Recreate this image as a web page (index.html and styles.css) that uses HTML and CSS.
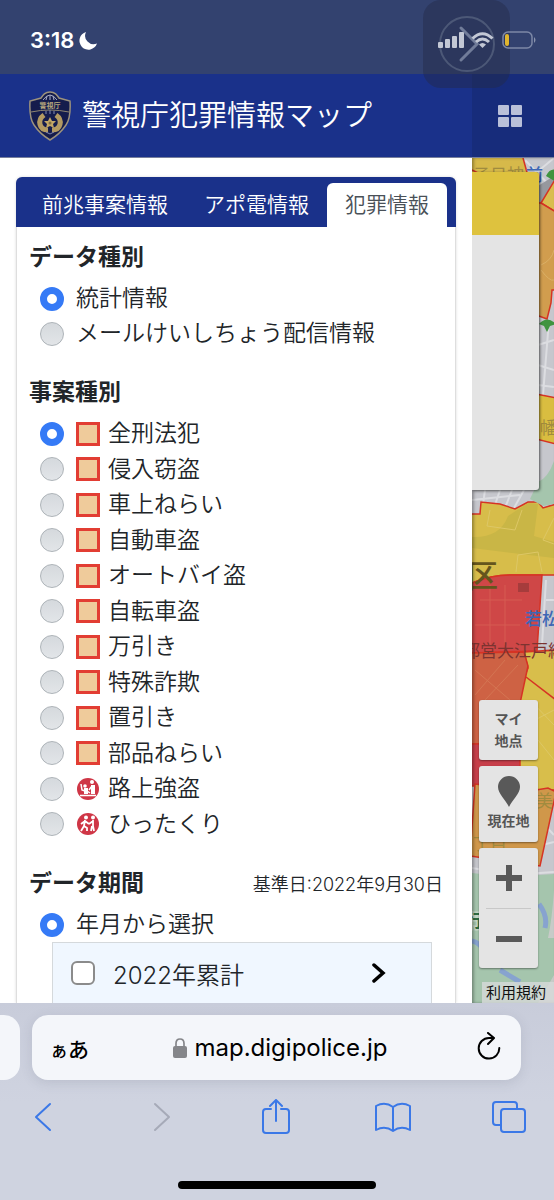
FILE: index.html
```html
<!DOCTYPE html>
<html lang="ja">
<head>
    <meta charset="UTF-8">
    <meta name="viewport" content="width=device-width, initial-scale=1">
    <title>警視庁犯罪情報マップ</title>
    <link rel="stylesheet" href="styles.css">
</head>
<body>
    <div class="status-bar">
        <span class="time">3:18</span>
        <svg class="moon" width="19" height="19" viewBox="0 0 19 19"><path d="M7 1A9 9 0 1 0 18 12.500A8.500 8.500 0 0 1 7 1Z" fill="#fff"/></svg>
        <svg class="signal" width="26" height="16" viewBox="0 0 26 16" fill="#c3c8d5">
            <rect x="0" y="10" width="5" height="6" rx="1"/><rect x="7" y="7" width="5" height="9" rx="1"/><rect x="14" y="4" width="5" height="12" rx="1"/><rect x="21" y="0" width="5" height="16" rx="1"/>
        </svg>
        <svg class="wifi" width="23" height="17" viewBox="0 0 23 17" fill="none" stroke="#c3c8d5" stroke-width="3">
            <path d="M1.500 6.500Q11.500-3 21.500 6.500M5 10Q11.500 4 18 10"/><path d="M8 12.500Q11.500 9.500 15 12.500L11.500 16Z" fill="#c3c8d5" stroke="none"/>
        </svg>
        <svg class="battery" width="35" height="18" viewBox="0 0 35 18">
            <rect x="1" y="1" width="29" height="16" rx="5" fill="none" stroke="#7d88a7" stroke-width="1.500"/><rect x="3" y="3" width="4" height="12" rx="2" fill="#e0b52e"/><path d="M32 6Q35 9 32 12Z" fill="#8b94ae"/>
        </svg>
    </div>
    <div class="assistive">
        <svg viewBox="0 0 87 88"><circle cx="44" cy="44" r="27" fill="none" stroke="#4c5877" stroke-width="2"/><path d="M38 28L54 44L38 60" fill="none" stroke="#717c99" stroke-width="3" stroke-linecap="round"/></svg>
    </div>

    <header class="header">
        <svg class="logo" width="42" height="50" viewBox="0 0 42 50">
            <path d="M21 1C16 1 14 4 12 7L1 10Q0 27 5 34Q11 43 21 49Q31 43 37 34Q42 27 41 10L30 7C28 4 26 1 21 1Z" fill="#151c4c" stroke="#9c927d" stroke-width="1.500"/>
            <path d="M2 21Q21 17 40 21" fill="none" stroke="#8e8571"/>
            <path d="M14 9Q21-1 28 9M17 9L18 5M21 9V4M25 9L24 5" fill="none" stroke="#a8adc7"/>
            <text x="21" y="17" text-anchor="middle" class="logo-text">警視庁</text>
            <path d="M15 24C8 29 10 39 19 39M27 24C34 29 32 39 23 39" fill="none" stroke="#b39a62" stroke-width="5"/>
            <path d="M21 26L23 30L27 30L24 33L25 37L21 35L17 37L18 33L15 30L19 30Z" fill="#c3a766"/>
            <circle cx="21" cy="32" r="1.500" fill="#7d6c43"/>
            <path d="M17 20V23M21 19V23M25 20V23M17 41L21 43L25 41" stroke="#8289ae" fill="none"/>
        </svg>
        <h1>警視庁犯罪情報マップ</h1>
        <div class="menu-side">
            <button class="menu" aria-label="メニュー"><i></i><i></i><i></i><i></i></button>
        </div>
    </header>

    <main class="content">
        <div class="drawer">
            <form class="panel">
                <nav class="tabs">
                    <a href="#zencho">前兆事案情報</a>
                    <a href="#apoden">アポ電情報</a>
                    <a href="#hanzai" class="active">犯罪情報</a>
                </nav>

                <section>
                    <h2>データ種別</h2>
                    <ul class="list">
                        <li><label><input type="radio" name="data" checked>統計情報</label></li>
                        <li><label><input type="radio" name="data">メールけいしちょう配信情報</label></li>
                    </ul>
                </section>

                <section>
                    <h2>事案種別</h2>
                    <ul class="list crimes">
                        <li><label><input type="radio" name="crime" checked><span class="area"></span>全刑法犯</label></li>
                        <li><label><input type="radio" name="crime"><span class="area"></span>侵入窃盗</label></li>
                        <li><label><input type="radio" name="crime"><span class="area"></span>車上ねらい</label></li>
                        <li><label><input type="radio" name="crime"><span class="area"></span>自動車盗</label></li>
                        <li><label><input type="radio" name="crime"><span class="area"></span>オートバイ盗</label></li>
                        <li><label><input type="radio" name="crime"><span class="area"></span>自転車盗</label></li>
                        <li><label><input type="radio" name="crime"><span class="area"></span>万引き</label></li>
                        <li><label><input type="radio" name="crime"><span class="area"></span>特殊詐欺</label></li>
                        <li><label><input type="radio" name="crime"><span class="area"></span>置引き</label></li>
                        <li><label><input type="radio" name="crime"><span class="area"></span>部品ねらい</label></li>
                        <li><label><input type="radio" name="crime">
                            <svg class="mark" viewBox="0 0 24 24"><circle cx="12" cy="12" r="11" fill="#cf3646"/><g fill="#fff"><circle cx="16" cy="5" r="2"/><circle cx="9" cy="9" r="1.800"/><path d="M15 8H19V17H15ZM8 11H12V17H8Z"/><path d="M16 9L13 13M5 7L6 13L9 14M4 18.500H20M11 14L14 16" fill="none" stroke="#fff" stroke-width="1.500"/></g></svg>路上強盗</label></li>
                        <li><label><input type="radio" name="crime">
                            <svg class="mark" viewBox="0 0 24 24"><circle cx="12" cy="12" r="11" fill="#cf3646"/><g fill="#fff"><circle cx="10" cy="5.500" r="2"/><circle cx="17" cy="5.500" r="2"/><path d="M9 8L8 14M9 9L5 12M9 9L13 12M8 14L5 19M8 14L11 16L11 19M17 8V14M17 9L13 12M16 14L15 19M17 14L18 19" fill="none" stroke="#fff" stroke-width="1.800"/></g></svg>ひったくり</label></li>
                    </ul>
                </section>

                <section>
                    <div class="heading-row">
                        <h2>データ期間</h2>
                        <span>基準日:2022年9月30日</span>
                    </div>
                    <ul class="list">
                        <li><label><input type="radio" name="period" checked>年月から選択</label></li>
                    </ul>
                    <div class="period">
                        <label><input type="checkbox">2022年累計</label>
                        <svg width="14" height="20" viewBox="0 0 14 20"><path d="M2 2L11 10L2 18" fill="none" stroke="#000" stroke-width="3.500" stroke-linecap="round"/></svg>
                    </div>
                </section>
            </form>
        </div>

        <aside class="map">
            <svg class="map-canvas" viewBox="472 158 82 845" preserveAspectRatio="xMinYMin slice">
                <rect x="472" y="158" width="200" height="845" fill="#c6c7cd"/>
                <g stroke="#dcdde1" stroke-width="2" fill="none">
                    <path d="M525 160L554 190M554 158L530 178M538 345L554 340M538 365L554 370M549 320L543 395M538 385L554 387M472 500L520 495M485 490L482 512M500 490L495 505M512 490L505 508M524 490L514 508M546 580L542 645M546 600H554"/>
                    <path d="M540 820L554 835M538 846L554 842M472 868Q510 876 554 872"/>
                </g>
                <path d="M538 205V186L554 176V190Z" fill="#96989e"/>
                <g stroke="#d63324" stroke-width="1.500">
                    <path d="M472 158H523L528 176H472Z" fill="#d6b94a" stroke="none"/>
                    <path d="M523 158L528 176M472 170L480 174" fill="none"/>
                    <path d="M556 178L541 203L556 212Z" fill="#d9bd50"/>
                    <path d="M541 203L556 212V290L552 290L551 303L547 319L536 315V203Z" fill="#d19d4e"/>
                    <path d="M536 394L556 398V444L536 439Z" fill="#d9bd40"/>
                    <path d="M470 514H480L481 502L500 504L515 509L528 502H538L543 508L556 504V575H510Q490 575 470 584Z" fill="#d7bd4a"/>
                    <path d="M472 537Q500 538 508 516L528 503L538 504L534 536L554 542V558L472 548Z" fill="#c9b646" stroke="none"/>
                    <path d="M470 584Q490 575 510 575H542L537 651L470 653Z" fill="#cf4747"/>
                    <path d="M524 652L556 650V790H515V700L528 668Z" fill="#d8be4b"/>
                    <path d="M470 653L524 652L528 666L519 708V744H470Z" fill="#ce6244"/>
                    <path d="M470 744H520V786H470Z" fill="#c73f4a"/>
                    <path d="M526 677L556 700" fill="none"/>
                    <path d="M475 784L530 791L548 788L556 792L540 866L470 856Z" fill="#d0974a"/>
                </g>
                <g fill="none" stroke="#ddc766" stroke-width="1">
                    <path d="M490 510L487 526L515 530L522 510M554 518L543 540L554 544M518 555L538 552L542 572M518 555L516 572M530 700L554 725M535 720L554 710M538 740L554 760"/>
                    <path d="M541 265Q552 260 554 250M541 270Q550 282 554 280" stroke="#dbb066"/>
                </g>
                <g fill="none" stroke="#d65c53"><path d="M480 600H522M490 585V645M505 585V645M475 625H520"/><path d="M475 695L505 660M485 700L518 665M475 670L510 700" stroke="#d47553"/></g>
                <rect x="518" y="583" width="11" height="9" fill="#a63c3c"/>
                <path d="M538 482Q548 478 554 461V504L543 506L530 499Z" fill="#a5c5ad"/>
                <path d="M472 873Q510 878 554 874V1003H472Z" fill="#a5c5ad"/>
                <path d="M554 890Q552 920 548 938H554ZM538 1003L554 975V1003Z" fill="#c7cbc8"/>
                <path d="M539 904Q548 916 545 928M472 941Q480 942 488 956M500 970L520 982" fill="none" stroke="#87a3cf" stroke-width="5"/>
                <path d="M546 176Q550 168 556 170V182L551 179ZM539 324Q547 315 556 324L550 326L547 332L544 326Z" fill="#40943f"/>
                <text x="473" y="181" class="m-label faded">子日神</text>
                <text x="526" y="181" class="m-label blue">前</text>
                <text x="540" y="434" class="m-label faded">幡</text>
                <text x="467" y="587" class="m-label ward">区</text>
                <text x="525" y="625" class="m-label blue">若松</text>
                <text x="463" y="657" class="m-label line">都営大江戸線</text>
                <text x="536" y="807" class="m-label faded">美</text>
                <text x="473" y="850" class="m-label faded">丁目</text>
                <text x="466" y="927" class="m-label green">行</text>
            </svg>
            <div class="popup"></div>
            <div class="controls">
                <button>マイ<br>地点</button>
                <button class="locate">
                    <svg width="24" height="31" viewBox="0 0 24 31"><path d="M12 31C9 24 1 18 1 11A11 11 0 0 1 23 11C23 18 15 24 12 31Z" fill="#595959"/></svg>
                    現在地
                </button>
                <div class="zoom">
                    <button aria-label="拡大"><svg width="28" height="28" viewBox="0 0 28 28"><path d="M1 14H27M14 1V27" stroke="#595959" stroke-width="6"/></svg></button>
                    <button aria-label="縮小"><svg width="28" height="28" viewBox="0 0 28 28"><path d="M1 14H27" stroke="#595959" stroke-width="6"/></svg></button>
                </div>
            </div>
            <a class="terms" href="#terms">利用規約</a>
        </aside>
    </main>

    <footer class="browser">
        <div class="address-row">
            <div class="prev-tab"></div>
            <div class="address">
                <button class="aa" aria-label="表示設定"><small>ぁ</small>あ</button>
                <a class="url" href="#">
                    <svg width="14" height="20" viewBox="0 0 14 20"><rect y="8" width="14" height="12" rx="2" fill="#85868a"/><path d="M3 9V5.500Q3 1 7 1T11 5.500V9" fill="none" stroke="#85868a" stroke-width="1.700"/></svg>
                    map.digipolice.jp
                </a>
                <button aria-label="再読み込み"><svg width="24" height="28" viewBox="0 0 24 28" fill="none" stroke="#000" stroke-width="2" stroke-linecap="round" stroke-linejoin="round"><path d="M12 6A10.300 10.300 0 1 0 22.300 16M11 1L17 6L11 12M12 6H16"/></svg></button>
            </div>
        </div>
        <div class="toolbar">
            <button aria-label="戻る"><svg width="36" height="36" viewBox="0 0 36 36"><path d="M25 5L11 18L25 31"/></svg></button>
            <button aria-label="進む" class="off"><svg width="36" height="36" viewBox="0 0 36 36"><path d="M13 5L27 18L13 31"/></svg></button>
            <button aria-label="共有"><svg width="36" height="36" viewBox="0 0 36 36"><path d="M13 10H8Q5 10 5 13V31Q5 34 8 34H28Q31 34 31 31V13Q31 10 28 10H23M18 22V1M12 7L18 1L24 7"/></svg></button>
            <button aria-label="ブックマーク"><svg width="36" height="36" viewBox="0 0 36 36"><path d="M18 8Q10 2 1 7V31Q10 26 18 32Q26 26 35 31V7Q26 2 18 8V32"/></svg></button>
            <button aria-label="タブ"><svg width="36" height="36" viewBox="0 0 36 36"><rect x="10" y="10" width="24" height="23" rx="3"/><path d="M10 26H5Q2 26 2 23V6Q2 3 5 3H23Q26 3 26 6V10"/></svg></button>
        </div>
        <div class="home-bar"></div>
    </footer>
</body>
</html>
```
FILE: styles.css
```css
* {
    box-sizing: border-box;
}

body {
    margin: 0;
    height: 100vh;
    display: flex;
    flex-direction: column;
    overflow: hidden;
    background-color: #fff;
    color: #212529;
    font-family: Inter, "Noto Sans CJK JP", sans-serif;
    font-weight: 350;
}

button {
    border: none;
    padding: 0;
    background: none;
    font-family: inherit;
    cursor: pointer;
}

a {
    color: inherit;
    text-decoration: none;
}

/* status bar */
.status-bar {
    flex: 0 0 74px;
    display: flex;
    align-items: center;
    padding: 6px 17px 0 30px;
    background-color: #33426f;
}

.status-bar svg {
    position: relative;
    z-index: 3;
}

.time {
    color: #fff;
    font-size: 22px;
    font-weight: 600;
    line-height: 24px;
}

.moon {
    margin-left: 5px;
}

.signal {
    margin-left: auto;
}

.wifi {
    margin: 0 8px 0 7px;
}

.assistive {
    position: absolute;
    top: 0;
    right: 44px;
    width: 87px;
    height: 88px;
    border-radius: 18px;
    background-color: rgba(35, 42, 70, 0.45);
    z-index: 2;
}

/* header */
.header {
    flex: 0 0 84px;
    display: flex;
    align-items: center;
    padding-left: 29px;
    background-color: #1a318a;
    border-bottom: 1px solid #777f9c;
}

.logo-text {
    font-size: 7px;
    font-weight: 700;
    fill: #b5a67d;
}

h1 {
    flex: 1;
    margin: 0 0 0 11px;
    color: #fff;
    font-size: 29px;
    font-weight: 350;
    line-height: 40px;
    white-space: nowrap;
}

.menu-side {
    width: 82px;
    height: 100%;
    display: flex;
    align-items: center;
    padding-left: 26px;
    background-color: #172c7b;
}

.menu {
    display: grid;
    grid-template-columns: 11px 11px;
    gap: 2px;
}

.menu i {
    height: 10px;
    background-color: #b9c0d9;
    border-radius: 1px;
}

/* drawer */
.content {
    flex: 1;
    min-height: 0;
    display: flex;
}

.drawer {
    flex: 1;
    padding: 19px 16px 0;
    overflow: hidden;
}

.panel {
    height: 100%;
    border: 1px solid #dedede;
    border-top: none;
    border-bottom: none;
    border-radius: 6px 6px 0 0;
    box-shadow: 0 0 3px rgba(0, 0, 0, 0.15);
}

.tabs {
    display: flex;
    margin: 0 -1px 12px;
    padding: 6px 8px 0;
    background-color: #1a318a;
    border-radius: 6px 6px 0 0;
    color: #fff;
    font-size: 21px;
    line-height: 44px;
    white-space: nowrap;
}

.tabs a {
    padding: 0 18px;
}

.tabs .active {
    background-color: #fff;
    border-radius: 6px 6px 0 0;
    color: #495057;
}

section {
    padding: 0 12px;
}

h2 {
    margin: 0 0 6px;
    font-size: 23px;
    font-weight: 700;
    line-height: 36px;
}

.list {
    display: flex;
    flex-direction: column;
    justify-content: space-between;
    margin: 0 0 23px;
    padding: 0 0 0 11px;
    list-style: none;
    font-size: 23px;
    line-height: 35px;
}

.crimes {
    height: 426px;
}

.list label {
    display: flex;
    align-items: center;
}

input[type="radio"] {
    appearance: none;
    width: 24px;
    height: 24px;
    margin: 0 12px 0 0;
    border: 1px solid #adb3b8;
    border-radius: 50%;
    background-image: linear-gradient(#d5d9dd, #e2e5e8);
}

input[type="radio"]:checked {
    border: 7px solid #357af6;
    background: #fff;
}

.area {
    width: 24px;
    height: 24px;
    margin-right: 8px;
    border: 3px solid #e23d33;
    background-color: #efcb9b;
}

.mark {
    width: 24px;
    height: 24px;
    margin-right: 8px;
}

.heading-row {
    display: flex;
    justify-content: space-between;
    font-size: 18px;
    line-height: 40px;
}

section:last-child .list {
    margin-bottom: 0;
}

.period {
    display: flex;
    align-items: center;
    justify-content: space-between;
    height: 80px;
    margin: 0 11px 0 23px;
    padding: 0 45px 18px 18px;
    border: 1px solid #d5d9dc;
    background-color: #f0f7ff;
    font-size: 24px;
}

.period label {
    display: flex;
    align-items: center;
}

input[type="checkbox"] {
    appearance: none;
    width: 24px;
    height: 24px;
    margin: 0 18px 0 0;
    border: 2px solid #8b8b8b;
    border-radius: 6px;
    background-color: #fff;
}

/* map */
.map {
    position: relative;
    width: 82px;
    display: flex;
    flex-direction: column;
    overflow: hidden;
    box-shadow: inset 2px 0 3px rgba(0, 0, 0, 0.3);
}

.map-canvas {
    position: absolute;
    top: 0;
    left: 0;
    width: 100%;
    height: 100%;
    z-index: -1;
}

.m-label {
    font-size: 17px;
    font-weight: 400;
}

.faded {
    fill: #a08b3e;
}

.blue {
    fill: #3d66b5;
    font-weight: 500;
}

.ward {
    font-size: 31px;
    font-weight: 500;
    fill: #65551d;
}

.line {
    fill: #7c3330;
}

.green {
    fill: #2e6d43;
    font-weight: 700;
    stroke: #c5d8c9;
    stroke-width: 3px;
    paint-order: stroke;
}

.popup {
    height: 318px;
    margin: 14px 15px 0 0;
    border-top: 63px solid #dec23e;
    border-radius: 0 3px 3px 0;
    background-color: #e4e4e4;
    box-shadow: 1px 1px 3px rgba(0, 0, 0, 0.6);
}

.controls {
    display: flex;
    flex-direction: column;
    gap: 6px;
    margin: auto 16px 14px 7px;
}

.controls > * {
    border-radius: 3px;
    background-color: #e4e4e4;
    box-shadow: 0 1px 2px rgba(0, 0, 0, 0.4);
}

.controls button {
    height: 60px;
    color: #555;
    font-size: 14px;
    font-weight: 700;
    line-height: 22px;
}

.controls .locate {
    display: flex;
    flex-direction: column;
    align-items: center;
    justify-content: center;
    gap: 3px;
    height: 76px;
}

.zoom {
    display: flex;
    flex-direction: column;
    padding: 0 7px;
}

.zoom button {
    display: flex;
    align-items: center;
    justify-content: center;
}

.zoom button + button {
    border-top: 1px solid #c8c8c8;
}

.terms {
    margin-left: 10px;
    padding-left: 4px;
    background-color: rgba(215, 218, 218, 0.8);
    color: #111;
    font-size: 15px;
    font-weight: 400;
    line-height: 21px;
}

/* browser bar */
.browser {
    flex: 0 0 197px;
    display: flex;
    flex-direction: column;
    background-color: #cfd3e0;
    background-image: linear-gradient(#c8ccda, #cfd3e0 50%);
}

.address-row {
    display: flex;
    gap: 12px;
    height: 65px;
    margin: 12px 33px 0 0;
}

.prev-tab {
    width: 20px;
    border-radius: 0 16px 16px 0;
    background-color: #f4f6fa;
}

.address {
    flex: 1;
    display: flex;
    align-items: center;
    justify-content: space-between;
    padding: 0 20px 0 18px;
    border-radius: 16px;
    background-color: #f4f6fa;
    box-shadow: 0 3px 12px rgba(80, 85, 110, 0.15);
}

.aa {
    font-size: 21px;
    font-weight: 500;
}

.aa small {
    font-size: 18px;
}

.url {
    display: flex;
    align-items: center;
    gap: 8px;
    margin-right: 6px;
    color: #000;
    font-size: 24px;
    font-weight: 400;
}

.toolbar {
    display: flex;
    justify-content: space-between;
    padding: 19px 27px 0 25px;
}

.toolbar button {
    height: 36px;
}

.toolbar svg {
    fill: none;
    stroke: #3b78e7;
    stroke-width: 2;
    stroke-linecap: round;
    stroke-linejoin: round;
}

.toolbar .off svg {
    stroke: #a6aab8;
}

.home-bar {
    width: 198px;
    height: 8px;
    margin: auto auto 11px;
    border-radius: 4px;
    background-color: #000;
}
```
